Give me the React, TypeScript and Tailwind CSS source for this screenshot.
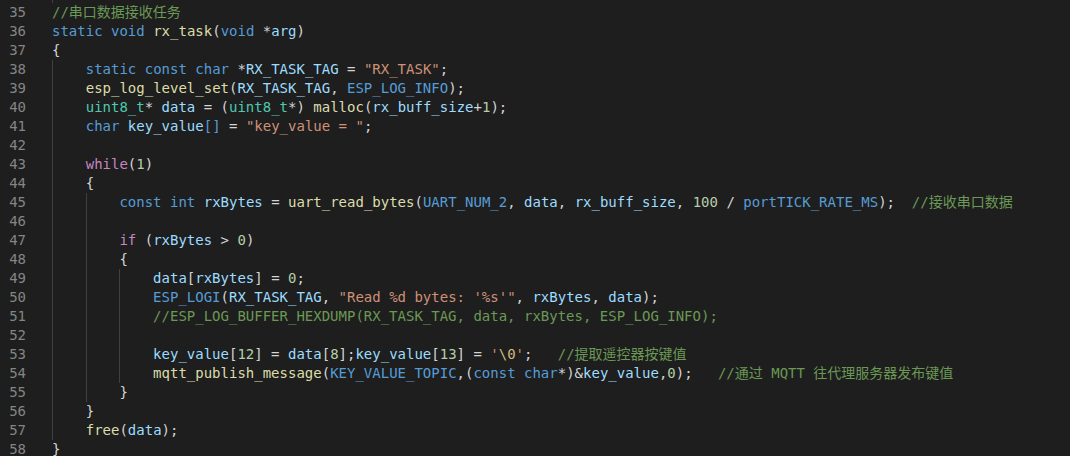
import React from "react";

type T = [string, string];

const C: Record<string, string> = {
  p: "text-[#d4d4d4]",
  k: "text-[#569cd6]",
  f: "text-[#dcdcaa]",
  v: "text-[#9cdcfe]",
  s: "text-[#ce9178]",
  e: "text-[#d7ba7d]",
  c: "text-[#6a9955]",
  n: "text-[#b5cea8]",
  t: "text-[#4ec9b0]",
  m: "text-[#569cd6]",
  w: "text-[#c586c0]",
};

type Line = { no: number; guides: number; toks: T[] };

const lines: Line[] = [
  { no: 35, guides: 0, toks: [["//串口数据接收任务", "c"]] },
  {
    no: 36,
    guides: 0,
    toks: [
      ["static", "k"], [" ", "p"], ["void", "k"], [" ", "p"], ["rx_task", "f"], ["(", "p"],
      ["void", "k"], [" *", "p"], ["arg", "v"], [")", "p"],
    ],
  },
  { no: 37, guides: 0, toks: [["{", "p"]] },
  {
    no: 38,
    guides: 1,
    toks: [
      ["static", "k"], [" ", "p"], ["const", "k"], [" ", "p"], ["char", "k"], [" *", "p"],
      ["RX_TASK_TAG", "v"], [" = ", "p"], ["\"RX_TASK\"", "s"], [";", "p"],
    ],
  },
  {
    no: 39,
    guides: 1,
    toks: [
      ["esp_log_level_set", "f"], ["(", "p"], ["RX_TASK_TAG", "v"], [", ", "p"],
      ["ESP_LOG_INFO", "m"], [");", "p"],
    ],
  },
  {
    no: 40,
    guides: 1,
    toks: [
      ["uint8_t", "t"], ["* ", "p"], ["data", "v"], [" = (", "p"], ["uint8_t", "t"], ["*) ", "p"],
      ["malloc", "f"], ["(", "p"], ["rx_buff_size", "v"], ["+", "p"], ["1", "n"], [");", "p"],
    ],
  },
  {
    no: 41,
    guides: 1,
    toks: [
      ["char", "k"], [" ", "p"], ["key_value", "v"], ["[]", "k"], [" = ", "p"],
      ["\"key_value = \"", "s"], [";", "p"],
    ],
  },
  { no: 42, guides: 1, toks: [] },
  { no: 43, guides: 1, toks: [["while", "w"], ["(", "p"], ["1", "n"], [")", "p"]] },
  { no: 44, guides: 1, toks: [["{", "p"]] },
  {
    no: 45,
    guides: 2,
    toks: [
      ["const", "k"], [" ", "p"], ["int", "k"], [" ", "p"], ["rxBytes", "v"], [" = ", "p"],
      ["uart_read_bytes", "f"], ["(", "p"], ["UART_NUM_2", "m"], [", ", "p"], ["data", "v"],
      [", ", "p"], ["rx_buff_size", "v"], [", ", "p"], ["100", "n"], [" / ", "p"],
      ["portTICK_RATE_MS", "m"], [");  ", "p"], ["//接收串口数据", "c"],
    ],
  },
  { no: 46, guides: 2, toks: [] },
  {
    no: 47,
    guides: 2,
    toks: [["if", "w"], [" (", "p"], ["rxBytes", "v"], [" > ", "p"], ["0", "n"], [")", "p"]],
  },
  { no: 48, guides: 2, toks: [["{", "p"]] },
  {
    no: 49,
    guides: 3,
    toks: [["data", "v"], ["[", "p"], ["rxBytes", "v"], ["] = ", "p"], ["0", "n"], [";", "p"]],
  },
  {
    no: 50,
    guides: 3,
    toks: [
      ["ESP_LOGI", "m"], ["(", "p"], ["RX_TASK_TAG", "v"], [", ", "p"],
      ["\"Read %d bytes: '%s'\"", "s"], [", ", "p"], ["rxBytes", "v"], [", ", "p"],
      ["data", "v"], [");", "p"],
    ],
  },
  {
    no: 51,
    guides: 3,
    toks: [["//ESP_LOG_BUFFER_HEXDUMP(RX_TASK_TAG, data, rxBytes, ESP_LOG_INFO);", "c"]],
  },
  { no: 52, guides: 3, toks: [] },
  {
    no: 53,
    guides: 3,
    toks: [
      ["key_value", "v"], ["[", "p"], ["12", "n"], ["] = ", "p"], ["data", "v"], ["[", "p"],
      ["8", "n"], ["];", "p"], ["key_value", "v"], ["[", "p"], ["13", "n"], ["] = ", "p"],
      ["'", "s"], ["\\0", "e"], ["'", "s"], [";   ", "p"], ["//提取遥控器按键值", "c"],
    ],
  },
  {
    no: 54,
    guides: 3,
    toks: [
      ["mqtt_publish_message", "f"], ["(", "p"], ["KEY_VALUE_TOPIC", "m"], [",(", "p"],
      ["const", "k"], [" ", "p"], ["char", "k"], ["*)&", "p"], ["key_value", "v"], [",", "p"],
      ["0", "n"], [");   ", "p"], ["//通过 MQTT 往代理服务器发布键值", "c"],
    ],
  },
  { no: 55, guides: 2, toks: [["}", "p"]] },
  { no: 56, guides: 1, toks: [["}", "p"]] },
  { no: 57, guides: 1, toks: [["free", "f"], ["(", "p"], ["data", "v"], [");", "p"]] },
  { no: 58, guides: 0, toks: [["}", "p"]] },
];

const font = {
  fontFamily: '"DejaVu Sans Mono", "Noto Sans CJK SC", monospace',
};

export default function App() {
  return (
    <div
      className="w-[1070px] h-[456px] bg-[#1e1e1e] overflow-hidden text-[14px] leading-[19px]"
      style={font}
    >
      <div className="flex h-[2.5px]">
        <div className="w-[52px] shrink-0" />
        <div className="w-[4ch] border-l border-[#404040]" />
      </div>
      {lines.map((ln) => (
        <div key={ln.no} className="flex h-[19px] whitespace-pre">
          <div className="w-[26px] shrink-0 text-right text-[#858585]">{ln.no}</div>
          <div className="w-[26px] shrink-0" />
          {Array.from({ length: ln.guides }).map((_, i) => (
            <div key={i} className="w-[4ch] shrink-0 border-l border-[#404040]" />
          ))}
          <div className="whitespace-pre">
            {ln.toks.map(([txt, cls], i) => (
              <span key={i} className={C[cls]}>
                {txt}
              </span>
            ))}
          </div>
        </div>
      ))}
    </div>
  );
}
